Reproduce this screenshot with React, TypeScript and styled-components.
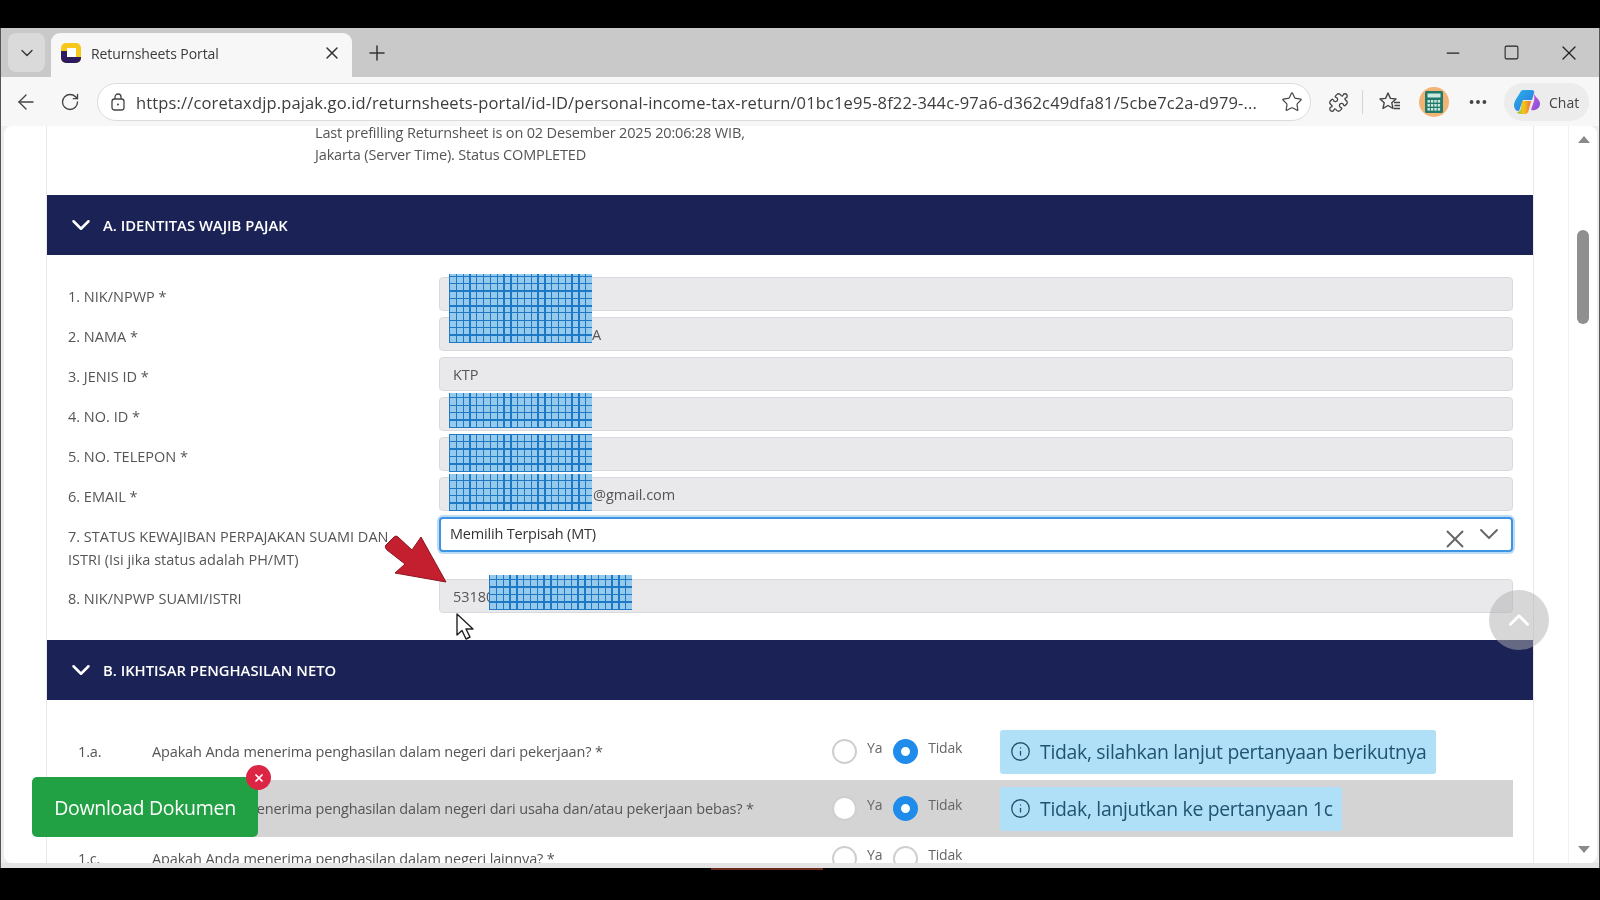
import React from "react";
import styled, { createGlobalStyle } from "styled-components";
import {
  ArrowLeft,
  ChevronDown,
  ChevronUp,
  Ellipsis,
  Info,
  Minus,
  Plus,
  Puzzle,
  RotateCw,
  Square,
  Star,
  X,
} from "lucide-react";

const GlobalStyle = createGlobalStyle`
  html, body {
    margin: 0;
    padding: 0;
    background: #000;
    overflow: hidden;
  }
  * { box-sizing: border-box; }
`;

const Screen = styled.div`
  width: 1600px;
  height: 900px;
  padding: 28px 0 32px;
  background: #000;
  font-family: "Open Sans", "Noto Sans", sans-serif;
  filter: blur(0.35px);
`;

const BrowserWindow = styled.div`
  position: relative;
  height: 840px;
  display: flex;
  flex-direction: column;
  background: #ededed;
  border-left: 1px solid #555;
  border-right: 1px solid #555;
`;

const TabStrip = styled.div`
  height: 49px;
  display: flex;
  align-items: flex-end;
  padding-left: 7px;
  background: #c9c9c9;
  color: #333;
`;

const TabListButton = styled.div`
  width: 37px;
  height: 39px;
  margin-bottom: 5px;
  display: flex;
  align-items: center;
  justify-content: center;
  border-radius: 8px;
  background: #dadada;
`;

const ActiveTab = styled.div`
  width: 301px;
  height: 44px;
  margin-left: 6px;
  padding: 0 10px 4px 10px;
  display: flex;
  align-items: center;
  gap: 10px;
  border-radius: 9px 9px 0 0;
  background: #f7f7f7;
`;

const TabTitle = styled.span`
  flex: 1;
  font-size: 14px;
  letter-spacing: -0.1px;
  color: #3a3a3a;
`;

const NewTab = styled.div`
  width: 30px;
  height: 39px;
  margin: 0 0 5px 10px;
  display: flex;
  align-items: center;
  justify-content: center;
`;

const WindowControls = styled.div`
  margin: 0 1px 0 auto;
  height: 49px;
  display: flex;
  align-items: center;
  color: #222;
`;

const WindowControl = styled.div`
  width: 58px;
  display: flex;
  justify-content: center;
`;

const Toolbar = styled.div`
  height: 49px;
  display: flex;
  align-items: center;
  padding: 1px 0 0 3px;
  background: #f7f7f7;
  color: #444;
`;

const ToolButton = styled.div`
  width: 44px;
  height: 38px;
  flex: none;
  display: flex;
  align-items: center;
  justify-content: center;
`;

const AddressBar = styled.div`
  width: 1214px;
  height: 38px;
  margin: 0 5px 0 5px;
  padding: 0 7px 0 12px;
  flex: none;
  display: flex;
  align-items: center;
  gap: 10px;
  border: 1px solid #dcdcdc;
  border-radius: 19px;
  background: #fff;
`;

const Url = styled.span`
  flex: 1;
  white-space: nowrap;
  overflow: hidden;
  font-size: 16.5px;
  color: #3d3d3d;
  letter-spacing: 0.14px;
`;

const ToolDivider = styled.div`
  width: 1px;
  height: 24px;
  margin: 0 5px 0 2px;
  flex: none;
  background: #d4d4d4;
`;

const CalcBadge = styled.div`
  width: 30px;
  height: 30px;
  display: flex;
  align-items: center;
  justify-content: center;
  border-radius: 50%;
  background: #f2b374;
`;

const ChatPill = styled.div`
  width: 85px;
  height: 38px;
  margin-left: 4px;
  padding-left: 9px;
  display: flex;
  align-items: center;
  gap: 8px;
  border-radius: 19px;
  background: #ececec;
  font-size: 14px;
  color: #444;
`;

const Viewport = styled.div`
  position: relative;
  flex: 1;
  min-height: 0;
  margin: 0 2px 0 3px;
  display: flex;
  overflow: hidden;
  border-radius: 8px 8px 8px 8px;
  background: #fff;
`;

const PageArea = styled.div`
  flex: 1;
  min-width: 0;
  padding: 0 34px 0 42px;
  overflow: hidden;
`;

const Card = styled.div`
  border-left: 1px solid #e8e8e8;
  border-right: 1px solid #e8e8e8;
  min-height: 100%;
`;

const Notice = styled.p`
  height: 73px;
  margin: -4px 0 0;
  padding-left: 268px;
  font-size: 14.5px;
  line-height: 22px;
  letter-spacing: -0.16px;
  color: #555;
`;

const SectionHeader = styled.div`
  height: 60px;
  padding-left: 19px;
  display: flex;
  align-items: center;
  gap: 7px;
  background: #1b2356;
  color: #fff;
  font-size: 14.8px;
  font-weight: 600;
`;

const FormGrid = styled.div`
  display: grid;
  grid-template-columns: 371px 1fr;
  row-gap: 6px;
  padding: 22px 20px 27px 21px;
`;

const FieldLabel = styled.div`
  padding: 7.5px 40px 2.5px 0;
  font-size: 14.5px;
  line-height: 23px;
  color: #555;
`;

const FieldInput = styled.div<{ $indent?: number }>`
  position: relative;
  height: 34px;
  padding-left: ${(p) => p.$indent ?? 13}px;
  display: flex;
  align-items: center;
  border: 1px solid #d9d9dd;
  border-radius: 4px;
  background: #e9e9ec;
  font-size: 14.5px;
  letter-spacing: -0.05px;
  color: #555;
`;

const SelectInput = styled.div`
  height: 35px;
  padding: 0 6px 2px 9px;
  display: flex;
  align-items: center;
  border: 2px solid #3d94e2;
  border-radius: 4px;
  background: #fff;
  box-shadow: 0 0 0 2px #bcdcf6;
  font-size: 14.5px;
  letter-spacing: -0.2px;
  color: #333;
`;

const SelectValue = styled.span`
  flex: 1;
`;

const SelectClear = styled.span`
  display: flex;
  margin: 11px 3px 0 0;
  color: #666;
`;

const SelectArrow = styled.span`
  display: flex;
  color: #666;
`;

// grid-paper patch that hides personal data in the video
const Redaction = styled.div<{ $left: number; $top: number; $height: number }>`
  position: absolute;
  left: ${(p) => p.$left}px;
  top: ${(p) => p.$top}px;
  width: 143px;
  height: ${(p) => p.$height}px;
  background-color: #96caec;
  background-image: repeating-linear-gradient(
      90deg,
      #1e78c4 0 1.3px,
      transparent 1.3px 6.8px
    ),
    repeating-linear-gradient(0deg, #1e78c4 0 1.3px, transparent 1.3px 7.4px);
`;

const QuestionList = styled.div`
  padding: 23px 20px 0 20px;
`;

const QuestionRow = styled.div<{ $shaded?: boolean; $compact?: boolean }>`
  height: ${(p) => (p.$compact ? 42 : 57)}px;
  padding-left: 11px;
  display: grid;
  grid-template-columns: 74px 680px 168px auto;
  align-items: center;
  background: ${(p) => (p.$shaded ? "#d4d4d4" : "transparent")};
  font-size: 14.5px;
  letter-spacing: -0.15px;
  color: #555;
`;

const RadioGroup = styled.div`
  display: flex;
  gap: 11px;
`;

const RadioOption = styled.label`
  display: flex;
  gap: 10px;
  font-size: 14px;
  letter-spacing: -0.2px;
  color: #666;
`;

const RadioCircle = styled.span<{ $checked?: boolean }>`
  width: 25px;
  height: 25px;
  flex: none;
  border-radius: 50%;
  background: #fff;
  border: ${(p) => (p.$checked ? "8px solid #1f8ceb" : "2px solid #cfcfcf")};
`;

const RadioText = styled.span`
  margin-top: -4px;
  line-height: 25px;
`;

const InfoAlert = styled.div`
  justify-self: start;
  height: 44px;
  padding: 0 9px 0 10px;
  display: flex;
  align-items: center;
  gap: 9px;
  border-radius: 3px;
  background: #b0e0f8;
  font-size: 19.4px;
  letter-spacing: -0.3px;
  color: #1f5370;
`;

const Scrollbar = styled.div`
  position: relative;
  width: 29px;
  flex: none;
  padding-top: 104px;
  border-left: 1px solid #f1f1f1;
`;

const ScrollThumb = styled.div`
  width: 12px;
  height: 94px;
  margin-left: 8px;
  border-radius: 6px;
  background: #8f8f8f;
`;

const ScrollArrow = styled.span<{ $up?: boolean }>`
  position: absolute;
  left: 9px;
  ${(p) => (p.$up ? "top: 10px;" : "bottom: 10px;")}
  width: 0;
  height: 0;
  border-left: 6px solid transparent;
  border-right: 6px solid transparent;
  ${(p) =>
    p.$up ? "border-bottom: 7px solid #8a8a8a;" : "border-top: 7px solid #8a8a8a;"}
`;

const BottomEdge = styled.div`
  position: relative;
  height: 5px;
  flex: none;
  background: #e4e4e4;
`;

const TaskbarSliver = styled.span`
  position: absolute;
  left: 710px;
  bottom: -2px;
  width: 112px;
  height: 2px;
  background: #6b2a20;
`;

const BackToTop = styled.div`
  position: absolute;
  left: 1485px;
  top: 464px;
  width: 60px;
  height: 60px;
  display: flex;
  align-items: center;
  justify-content: center;
  border-radius: 50%;
  background: rgba(175, 175, 175, 0.5);
  color: #fff;
`;

const DownloadButton = styled.div`
  position: absolute;
  left: 28px;
  top: 651px;
  width: 226px;
  height: 60px;
  display: flex;
  align-items: center;
  justify-content: center;
  border-radius: 5px;
  background: #22a044;
  color: #fff;
  font-size: 19.5px;
  letter-spacing: -0.3px;
`;

const DownloadClose = styled.span`
  position: absolute;
  right: -13px;
  top: -12px;
  width: 25px;
  height: 25px;
  display: flex;
  align-items: center;
  justify-content: center;
  border-radius: 50%;
  background: #dc2545;
  color: #fff;
`;

const ArrowMark = styled.svg`
  position: absolute;
  left: 376px;
  top: 406px;
`;

const CursorMark = styled.svg`
  position: absolute;
  left: 451px;
  top: 487px;
`;

const Favicon = () => (
  <svg width="20" height="20" viewBox="0 0 20 20">
    <rect width="20" height="20" rx="5" fill="#f6c81c" />
    <path d="M0 8v7a5 5 0 0 0 5 5h10a5 5 0 0 0 5-5v-1H6V8z" fill="#2d1a5e" />
    <rect x="6" y="5" width="9" height="9" fill="#fff" />
  </svg>
);

const LockIcon = () => (
  <svg width="16" height="18" viewBox="0 0 16 18" fill="none" stroke="#444" strokeWidth="1.3">
    <rect x="2" y="6" width="12" height="11" rx="2.5" />
    <path d="M5 6V4a3 3 0 0 1 6 0v2" />
    <circle cx="8" cy="11.5" r="1" fill="#444" stroke="none" />
  </svg>
);

const FavoritesIcon = () => (
  <svg width="24" height="24" viewBox="0 0 24 24" fill="none" stroke="#444" strokeWidth="1.4" strokeLinejoin="round">
    <path d="M10 3l2.4 5.4 5.6.6-4.2 3.8 1.2 5.7-5-3-5 3 1.2-5.7L2 9l5.600-.6z" />
    <path d="M16 12.500h6M16.500 15.500h5.500M16 18.500h6" />
  </svg>
);

const CalculatorIcon = () => (
  <svg width="18" height="22" viewBox="0 0 18 22">
    <rect width="18" height="22" rx="1.500" fill="#1f7a6a" />
    <rect x="2.500" y="2.500" width="13" height="4" fill="#cfe8df" />
    {[0, 1, 2].map((r) =>
      [0, 1, 2, 3].map((c) => (
        <rect key={`${r}-${c}`} x={2.5 + c * 3.4} y={9 + r * 4} width="2.400" height="2.600" fill="#cfe8df" />
      ))
    )}
  </svg>
);

const CopilotIcon = () => (
  <svg width="28" height="28" viewBox="0 0 28 28">
    <defs>
      <linearGradient id="copA" x1="0" y1="0" x2="1" y2="1">
        <stop offset="0" stopColor="#27b5e8" />
        <stop offset="1" stopColor="#2f6fe0" />
      </linearGradient>
      <linearGradient id="copB" x1="0" y1="0" x2="1" y2="1">
        <stop offset="0" stopColor="#d85fd0" />
        <stop offset="1" stopColor="#7a4be0" />
      </linearGradient>
      <linearGradient id="copC" x1="0" y1="0" x2="1" y2="0">
        <stop offset="0" stopColor="#8cc63f" />
        <stop offset="0.500" stopColor="#f5c518" />
        <stop offset="1" stopColor="#ee6a3a" />
      </linearGradient>
    </defs>
    <path d="M11 2h8c1.500 0 2 1 2.300 2L19 12H10l-4 11c-2 0-5-1-5-6 0-3 2-6 4-9l3-5c.6-.8 1.800-1 3-1z" fill="url(#copA)" />
    <path d="M20 4c1 2 2 4 4 6s3 4 3 6c0 3-2 5-5 6-2 .5-3 .5-4-.5L21 13c.5-3 .5-6-1-9z" fill="url(#copB)" />
    <path d="M9 13h9l-2 8c-.4 3-2 5-4 5H7c-1.500 0-2.500-.8-3-2 2.500 0 3.500-1.500 4-4z" fill="url(#copC)" />
  </svg>
);

const fields = [
  { label: "1. NIK/NPWP *", patch: { $left: 9, $top: -4, $height: 40 } },
  { label: "2. NAMA *", value: "A", indent: 152, patch: { $left: 9, $top: -6, $height: 31 } },
  { label: "3. JENIS ID *", value: "KTP" },
  { label: "4. NO. ID *", patch: { $left: 9, $top: -5, $height: 35 } },
  { label: "5. NO. TELEPON *", patch: { $left: 9, $top: -4, $height: 38 } },
  { label: "6. EMAIL *", value: "@gmail.com", indent: 153, patch: { $left: 9, $top: -4, $height: 37 } },
];

const questions = [
  {
    no: "1.a.",
    text: "Apakah Anda menerima penghasilan dalam negeri dari pekerjaan? *",
    tidak: true,
    info: "Tidak, silahkan lanjut pertanyaan berikutnya",
  },
  {
    no: "1.b.",
    text: "Apakah Anda menerima penghasilan dalam negeri dari usaha dan/atau pekerjaan bebas? *",
    tidak: true,
    info: "Tidak, lanjutkan ke pertanyaan 1c",
    shaded: true,
  },
  {
    no: "1.c.",
    text: "Apakah Anda menerima penghasilan dalam negeri lainnya? *",
    tidak: false,
  },
];

const App: React.FC = () => {
  return (
    <Screen>
      <GlobalStyle />
      <BrowserWindow>
        <TabStrip>
          <TabListButton>
            <ChevronDown size={20} strokeWidth={1.6} />
          </TabListButton>
          <ActiveTab>
            <Favicon />
            <TabTitle>Returnsheets Portal</TabTitle>
            <X size={20} strokeWidth={1.8} />
          </ActiveTab>
          <NewTab>
            <Plus size={24} strokeWidth={1.5} />
          </NewTab>
          <WindowControls>
            <WindowControl>
              <Minus size={20} strokeWidth={1.5} />
            </WindowControl>
            <WindowControl>
              <Square size={17} strokeWidth={1.5} />
            </WindowControl>
            <WindowControl>
              <X size={24} strokeWidth={1.3} />
            </WindowControl>
          </WindowControls>
        </TabStrip>

        <Toolbar>
          <ToolButton>
            <ArrowLeft size={24} strokeWidth={1.4} />
          </ToolButton>
          <ToolButton>
            <RotateCw size={20} strokeWidth={1.6} />
          </ToolButton>
          <AddressBar>
            <LockIcon />
            <Url>
              https://coretaxdjp.pajak.go.id/returnsheets-portal/id-ID/personal-income-tax-return/01bc1e95-8f22-344c-97a6-d362c49dfa81/5cbe7c2a-d979-...
            </Url>
            <Star size={22} strokeWidth={1.3} />
          </AddressBar>
          <ToolButton>
            <Puzzle size={21} strokeWidth={1.5} />
          </ToolButton>
          <ToolDivider />
          <ToolButton>
            <FavoritesIcon />
          </ToolButton>
          <ToolButton>
            <CalcBadge>
              <CalculatorIcon />
            </CalcBadge>
          </ToolButton>
          <ToolButton>
            <Ellipsis size={22} strokeWidth={2.2} />
          </ToolButton>
          <ChatPill>
            <CopilotIcon />
            Chat
          </ChatPill>
        </Toolbar>

        <Viewport>
          <PageArea>
            <Card>
              <Notice>
                Last prefilling Returnsheet is on 02 Desember 2025 20:06:28 WIB,
                <br />
                Jakarta (Server Time). Status COMPLETED
              </Notice>

              <SectionHeader>
                <ChevronDown size={30} strokeWidth={2} />
                A. IDENTITAS WAJIB PAJAK
              </SectionHeader>
              <FormGrid>
                {fields.map((f) => (
                  <React.Fragment key={f.label}>
                    <FieldLabel>{f.label}</FieldLabel>
                    <FieldInput $indent={f.indent}>
                      {f.value}
                      {f.patch && <Redaction {...f.patch} />}
                    </FieldInput>
                  </React.Fragment>
                ))}
                <FieldLabel>
                  7. STATUS KEWAJIBAN PERPAJAKAN SUAMI DAN ISTRI (Isi jika status adalah PH/MT)
                </FieldLabel>
                <SelectInput>
                  <SelectValue>Memilih Terpisah (MT)</SelectValue>
                  <SelectClear>
                    <X size={30} strokeWidth={1.5} />
                  </SelectClear>
                  <SelectArrow>
                    <ChevronDown size={32} strokeWidth={1.4} />
                  </SelectArrow>
                </SelectInput>
                <FieldLabel>8. NIK/NPWP SUAMI/ISTRI</FieldLabel>
                <FieldInput>
                  53180
                  <Redaction $left={49} $top={-5} $height={35} />
                </FieldInput>
              </FormGrid>

              <SectionHeader>
                <ChevronDown size={30} strokeWidth={2} />
                B. IKHTISAR PENGHASILAN NETO
              </SectionHeader>
              <QuestionList>
                {questions.map((q) => (
                  <QuestionRow key={q.no} $shaded={q.shaded} $compact={!q.info}>
                    <span>{q.no}</span>
                    <span>{q.text}</span>
                    <RadioGroup>
                      <RadioOption>
                        <RadioCircle />
                        <RadioText>Ya</RadioText>
                      </RadioOption>
                      <RadioOption>
                        <RadioCircle $checked={q.tidak} />
                        <RadioText>Tidak</RadioText>
                      </RadioOption>
                    </RadioGroup>
                    {q.info && (
                      <InfoAlert>
                        <Info size={21} strokeWidth={1.5} />
                        {q.info}
                      </InfoAlert>
                    )}
                  </QuestionRow>
                ))}
              </QuestionList>
            </Card>
          </PageArea>
          <Scrollbar>
            <ScrollArrow $up />
            <ScrollThumb />
            <ScrollArrow />
          </Scrollbar>

          <BackToTop>
            <ChevronUp size={34} strokeWidth={2} />
          </BackToTop>
          <DownloadButton>
            Download Dokumen
            <DownloadClose>
              <X size={12} strokeWidth={3.5} />
            </DownloadClose>
          </DownloadButton>
          <ArrowMark width="70" height="56" viewBox="0 0 70 56">
            <path
              d="M6 13 L14 5 Q16 3 18 5 L32 18 L41 5 L66 50 L15 41 L25 32 L7 18 Q4 15 6 13 Z"
              fill="#c41f2e"
              stroke="#8f1420"
              strokeWidth="1"
            />
          </ArrowMark>
          <CursorMark width="22" height="28" viewBox="0 0 22 28">
            <path
              d="M2 1 L2 22 L7 17.500 L11 26 L15 24 L11 16 L18 16 Z"
              fill="#fff"
              stroke="#222"
              strokeWidth="1.400"
              strokeLinejoin="round"
            />
          </CursorMark>
        </Viewport>
        <BottomEdge>
          <TaskbarSliver />
        </BottomEdge>
      </BrowserWindow>
    </Screen>
  );
};

export default App;
